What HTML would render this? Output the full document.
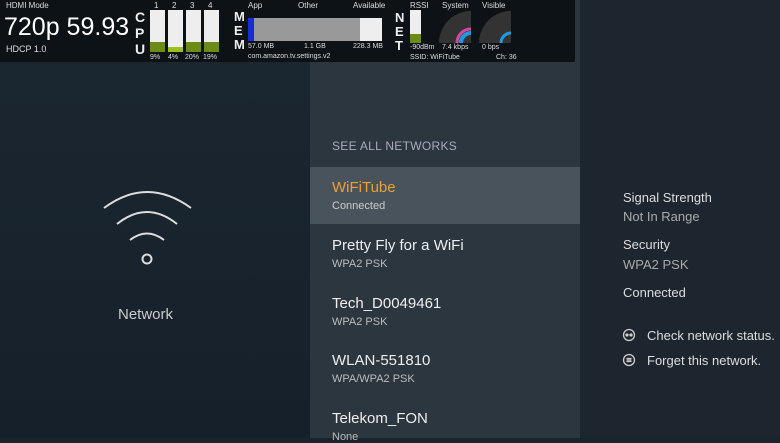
<!DOCTYPE html>
<html><head><style>
body{margin:0;width:780px;height:438px;overflow:hidden;background:#1a242d;font-family:"Liberation Sans",sans-serif;position:relative}
.a{position:absolute}
.t{color:#fff}
.s{font-size:8px;color:#ddd}
.x{font-size:7px;color:#ddd}
</style></head><body>
<div class="a" style="left:0;top:0;width:310px;height:438px;background:linear-gradient(180deg,#1b2731,#16202a)"></div>
<div class="a" style="left:310px;top:0;width:270px;height:438px;background:#2c363f"></div>
<div class="a" style="left:580px;top:0;width:200px;height:438px;background:#1d262e"></div>
<div class="a" style="left:310px;top:167px;width:270px;height:57px;background:#49535c"></div>

<div class="a" style="left:0;top:0;width:575px;height:62px;background:#0c1216"></div>
<div class="a s" style="left:6px;top:1px">HDMI Mode</div>
<div class="a t" style="left:4px;top:13px;font-size:25px">720p 59.93</div>
<div class="a" style="left:6px;top:44px;font-size:9px;color:#ddd">HDCP 1.0</div>
<div class="a t" style="left:135px;top:9px;font-size:14px;font-weight:bold;line-height:16px;color:#eee">C<br>P<br>U</div>
<div class="a" style="left:150px;top:10px;width:15px;height:42px;background:#eee"><div class="a" style="bottom:0;width:15px;height:10px;background:#6b8a18"></div></div>
<div class="a" style="left:168px;top:10px;width:15px;height:42px;background:#eee"><div class="a" style="bottom:0;width:15px;height:5px;background:#9cbf1c"></div></div>
<div class="a" style="left:186px;top:10px;width:15px;height:42px;background:#eee"><div class="a" style="bottom:0;width:15px;height:10px;background:#6b8a18"></div></div>
<div class="a" style="left:204px;top:10px;width:15px;height:42px;background:#eee"><div class="a" style="bottom:0;width:15px;height:10px;background:#6b8a18"></div></div>
<div class="a s" style="left:154px;top:1px">1</div>
<div class="a s" style="left:172px;top:1px">2</div>
<div class="a s" style="left:190px;top:1px">3</div>
<div class="a s" style="left:208px;top:1px">4</div>
<div class="a x" style="left:150px;top:54px">9%</div>
<div class="a x" style="left:168px;top:54px">4%</div>
<div class="a x" style="left:185px;top:54px">20%</div>
<div class="a x" style="left:203px;top:54px">19%</div>
<div class="a t" style="left:234px;top:10px;font-size:13px;font-weight:bold;line-height:14px;color:#eee">M<br>E<br>M</div>
<div class="a s" style="left:248px;top:1px">App</div>
<div class="a s" style="left:298px;top:1px">Other</div>
<div class="a s" style="left:353px;top:1px">Available</div>
<div class="a" style="left:248px;top:18px;width:134px;height:23px;background:#eee"></div>
<div class="a" style="left:248px;top:18px;width:112px;height:23px;background:#999"></div>
<div class="a" style="left:248px;top:18px;width:6px;height:23px;background:#1a2bd8"></div>
<div class="a x" style="left:248px;top:43px">57.0 MB</div>
<div class="a x" style="left:304px;top:43px">1.1 GB</div>
<div class="a x" style="left:353px;top:43px">228.3 MB</div>
<div class="a x" style="left:248px;top:53px">com.amazon.tv.settings.v2</div>
<div class="a t" style="left:395px;top:11px;font-size:13px;font-weight:bold;line-height:14px;color:#eee">N<br>E<br>T</div>
<div class="a s" style="left:410px;top:1px">RSSI</div>
<div class="a s" style="left:442px;top:1px">System</div>
<div class="a s" style="left:482px;top:1px">Visible</div>
<div class="a" style="left:410px;top:10px;width:11px;height:33px;background:#eee"><div class="a" style="bottom:0;width:11px;height:9px;background:#6b8a18"></div></div>
<svg class="a" style="left:439px;top:10px" width="32" height="33"><path d="M0 33 A32 32 0 0 1 32 1 V33Z" fill="#333"/><path d="M18 33 A14 14 0 0 1 32 19" stroke="#d04a9c" stroke-width="3" fill="none"/><path d="M22 33 A10 10 0 0 1 32 23" stroke="#1e9be0" stroke-width="4" fill="none"/></svg>
<svg class="a" style="left:479px;top:10px" width="32" height="33"><path d="M0 33 A32 32 0 0 1 32 1 V33Z" fill="#333"/><path d="M22 33 A10 10 0 0 1 32 23" stroke="#1e9be0" stroke-width="3" fill="none"/></svg>
<div class="a x" style="left:410px;top:44px">-90dBm</div>
<div class="a x" style="left:442px;top:44px">7.4 kbps</div>
<div class="a x" style="left:482px;top:44px">0 bps</div>
<div class="a x" style="left:410px;top:54px">SSID: WiFiTube</div>
<div class="a x" style="left:496px;top:54px">Ch: 36</div>

<svg class="a" style="left:100px;top:190px" width="95" height="80" fill="none" stroke="#ddd" stroke-width="2"><path d="M4 18 Q47 -14 91 18"/><path d="M17 34 Q47 10 77 34"/><path d="M30 50 Q47 37 64 50"/><circle cx="47" cy="69" r="4.5"/></svg>
<div class="a" style="left:118px;top:306px;font-size:15px;color:#ccc">Network</div>

<div class="a" style="left:332px;top:139px;font-size:12px;color:#aab;letter-spacing:.3px">SEE ALL NETWORKS</div>
<div class="a" style="left:332px;top:179px;font-size:15px;color:#f0a030">WiFiTube</div>
<div class="a" style="left:332px;top:200px;font-size:11px;color:#ccc">Connected</div>
<div class="a" style="left:332px;top:237px;font-size:15px;color:#eee">Pretty Fly for a WiFi</div>
<div class="a" style="left:332px;top:258px;font-size:11px;color:#bbb">WPA2 PSK</div>
<div class="a" style="left:332px;top:295px;font-size:15px;color:#eee">Tech_D0049461</div>
<div class="a" style="left:332px;top:316px;font-size:11px;color:#bbb">WPA2 PSK</div>
<div class="a" style="left:332px;top:352px;font-size:15px;color:#eee">WLAN-551810</div>
<div class="a" style="left:332px;top:373px;font-size:11px;color:#bbb">WPA/WPA2 PSK</div>
<div class="a" style="left:332px;top:410px;font-size:15px;color:#eee">Telekom_FON</div>
<div class="a" style="left:332px;top:431px;font-size:11px;color:#bbb">None</div>

<div class="a" style="left:623px;top:190px;font-size:13px;color:#ddd">Signal Strength</div>
<div class="a" style="left:623px;top:209px;font-size:13px;color:#aaa">Not In Range</div>
<div class="a" style="left:623px;top:237px;font-size:13px;color:#ddd">Security</div>
<div class="a" style="left:623px;top:257px;font-size:13px;color:#aaa">WPA2 PSK</div>
<div class="a" style="left:623px;top:285px;font-size:13px;color:#ddd">Connected</div>
<svg class="a" style="left:622px;top:328px" width="14" height="40" fill="none" stroke="#ccc" stroke-width="1.3"><circle cx="7" cy="7" r="5.5"/><circle cx="5" cy="7" r="1" fill="#ccc"/><circle cx="9" cy="7" r="1" fill="#ccc"/><circle cx="7" cy="32" r="5.5"/><path d="M4.5 30.5h5M4.5 32h5M4.5 33.5h5"/></svg>
<div class="a" style="left:647px;top:328px;font-size:13px;color:#ddd;white-space:nowrap">Check network status.</div>
<div class="a" style="left:647px;top:353px;font-size:13px;color:#ddd">Forget this network.</div>
</body></html>
